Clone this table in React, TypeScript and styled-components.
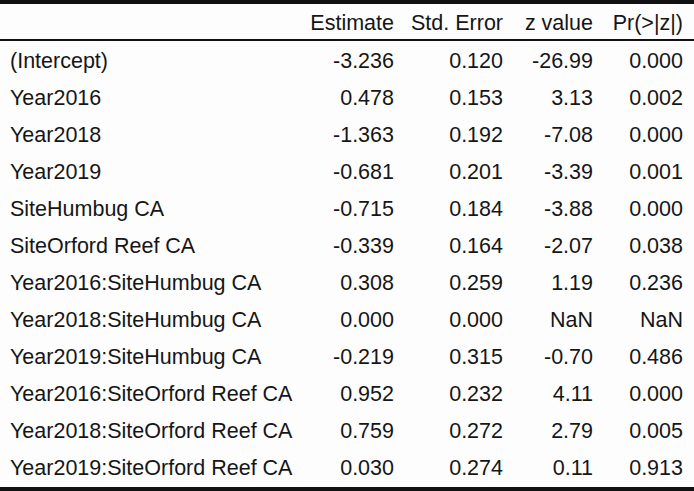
import React from 'react';
import styled, { createGlobalStyle } from 'styled-components';

const Global = createGlobalStyle`
  html, body {
    margin: 0;
    padding: 0;
    background: #fdfdfd;
  }
`;

const rows: string[][] = [
  ['(Intercept)', '-3.236', '0.120', '-26.99', '0.000'],
  ['Year2016', '0.478', '0.153', '3.13', '0.002'],
  ['Year2018', '-1.363', '0.192', '-7.08', '0.000'],
  ['Year2019', '-0.681', '0.201', '-3.39', '0.001'],
  ['SiteHumbug CA', '-0.715', '0.184', '-3.88', '0.000'],
  ['SiteOrford Reef CA', '-0.339', '0.164', '-2.07', '0.038'],
  ['Year2016:SiteHumbug CA', '0.308', '0.259', '1.19', '0.236'],
  ['Year2018:SiteHumbug CA', '0.000', '0.000', 'NaN', 'NaN'],
  ['Year2019:SiteHumbug CA', '-0.219', '0.315', '-0.70', '0.486'],
  ['Year2016:SiteOrford Reef CA', '0.952', '0.232', '4.11', '0.000'],
  ['Year2018:SiteOrford Reef CA', '0.759', '0.272', '2.79', '0.005'],
  ['Year2019:SiteOrford Reef CA', '0.030', '0.274', '0.11', '0.913'],
];

const headers = ['', 'Estimate', 'Std. Error', 'z value', 'Pr(>|z|)'];

const Table = styled.div`
  width: 694px;
  height: 491px;
  box-sizing: border-box;
  border-top: 4px solid #111;
  border-bottom: 4px solid #111;
  background: #fdfdfd;
  font-family: 'Liberation Sans', Arial, sans-serif;
  font-size: 21.5px;
  color: #161616;
`;

const Row = styled.div<{ $head?: boolean }>`
  display: grid;
  grid-template-columns: 294px 100px 109px 90px 90px;
  height: 37px;
  padding-top: 3px;
  box-sizing: border-box;
  align-items: center;
  border-bottom: ${(p) => (p.$head ? '2px solid #111' : 'none')};
`;

const Cell = styled.div<{ $label?: boolean }>`
  text-align: ${(p) => (p.$label ? 'left' : 'right')};
  padding-left: ${(p) => (p.$label ? '10px' : '0')};
  white-space: nowrap;
`;

export default function App() {
  return (
    <>
      <Global />
      <Table>
        <Row $head>
          {headers.map((h, i) => (
            <Cell key={i} $label={i === 0}>{h}</Cell>
          ))}
        </Row>
        {rows.map((r) => (
          <Row key={r[0]}>
            {r.map((c, i) => (
              <Cell key={i} $label={i === 0}>{c}</Cell>
            ))}
          </Row>
        ))}
      </Table>
    </>
  );
}
